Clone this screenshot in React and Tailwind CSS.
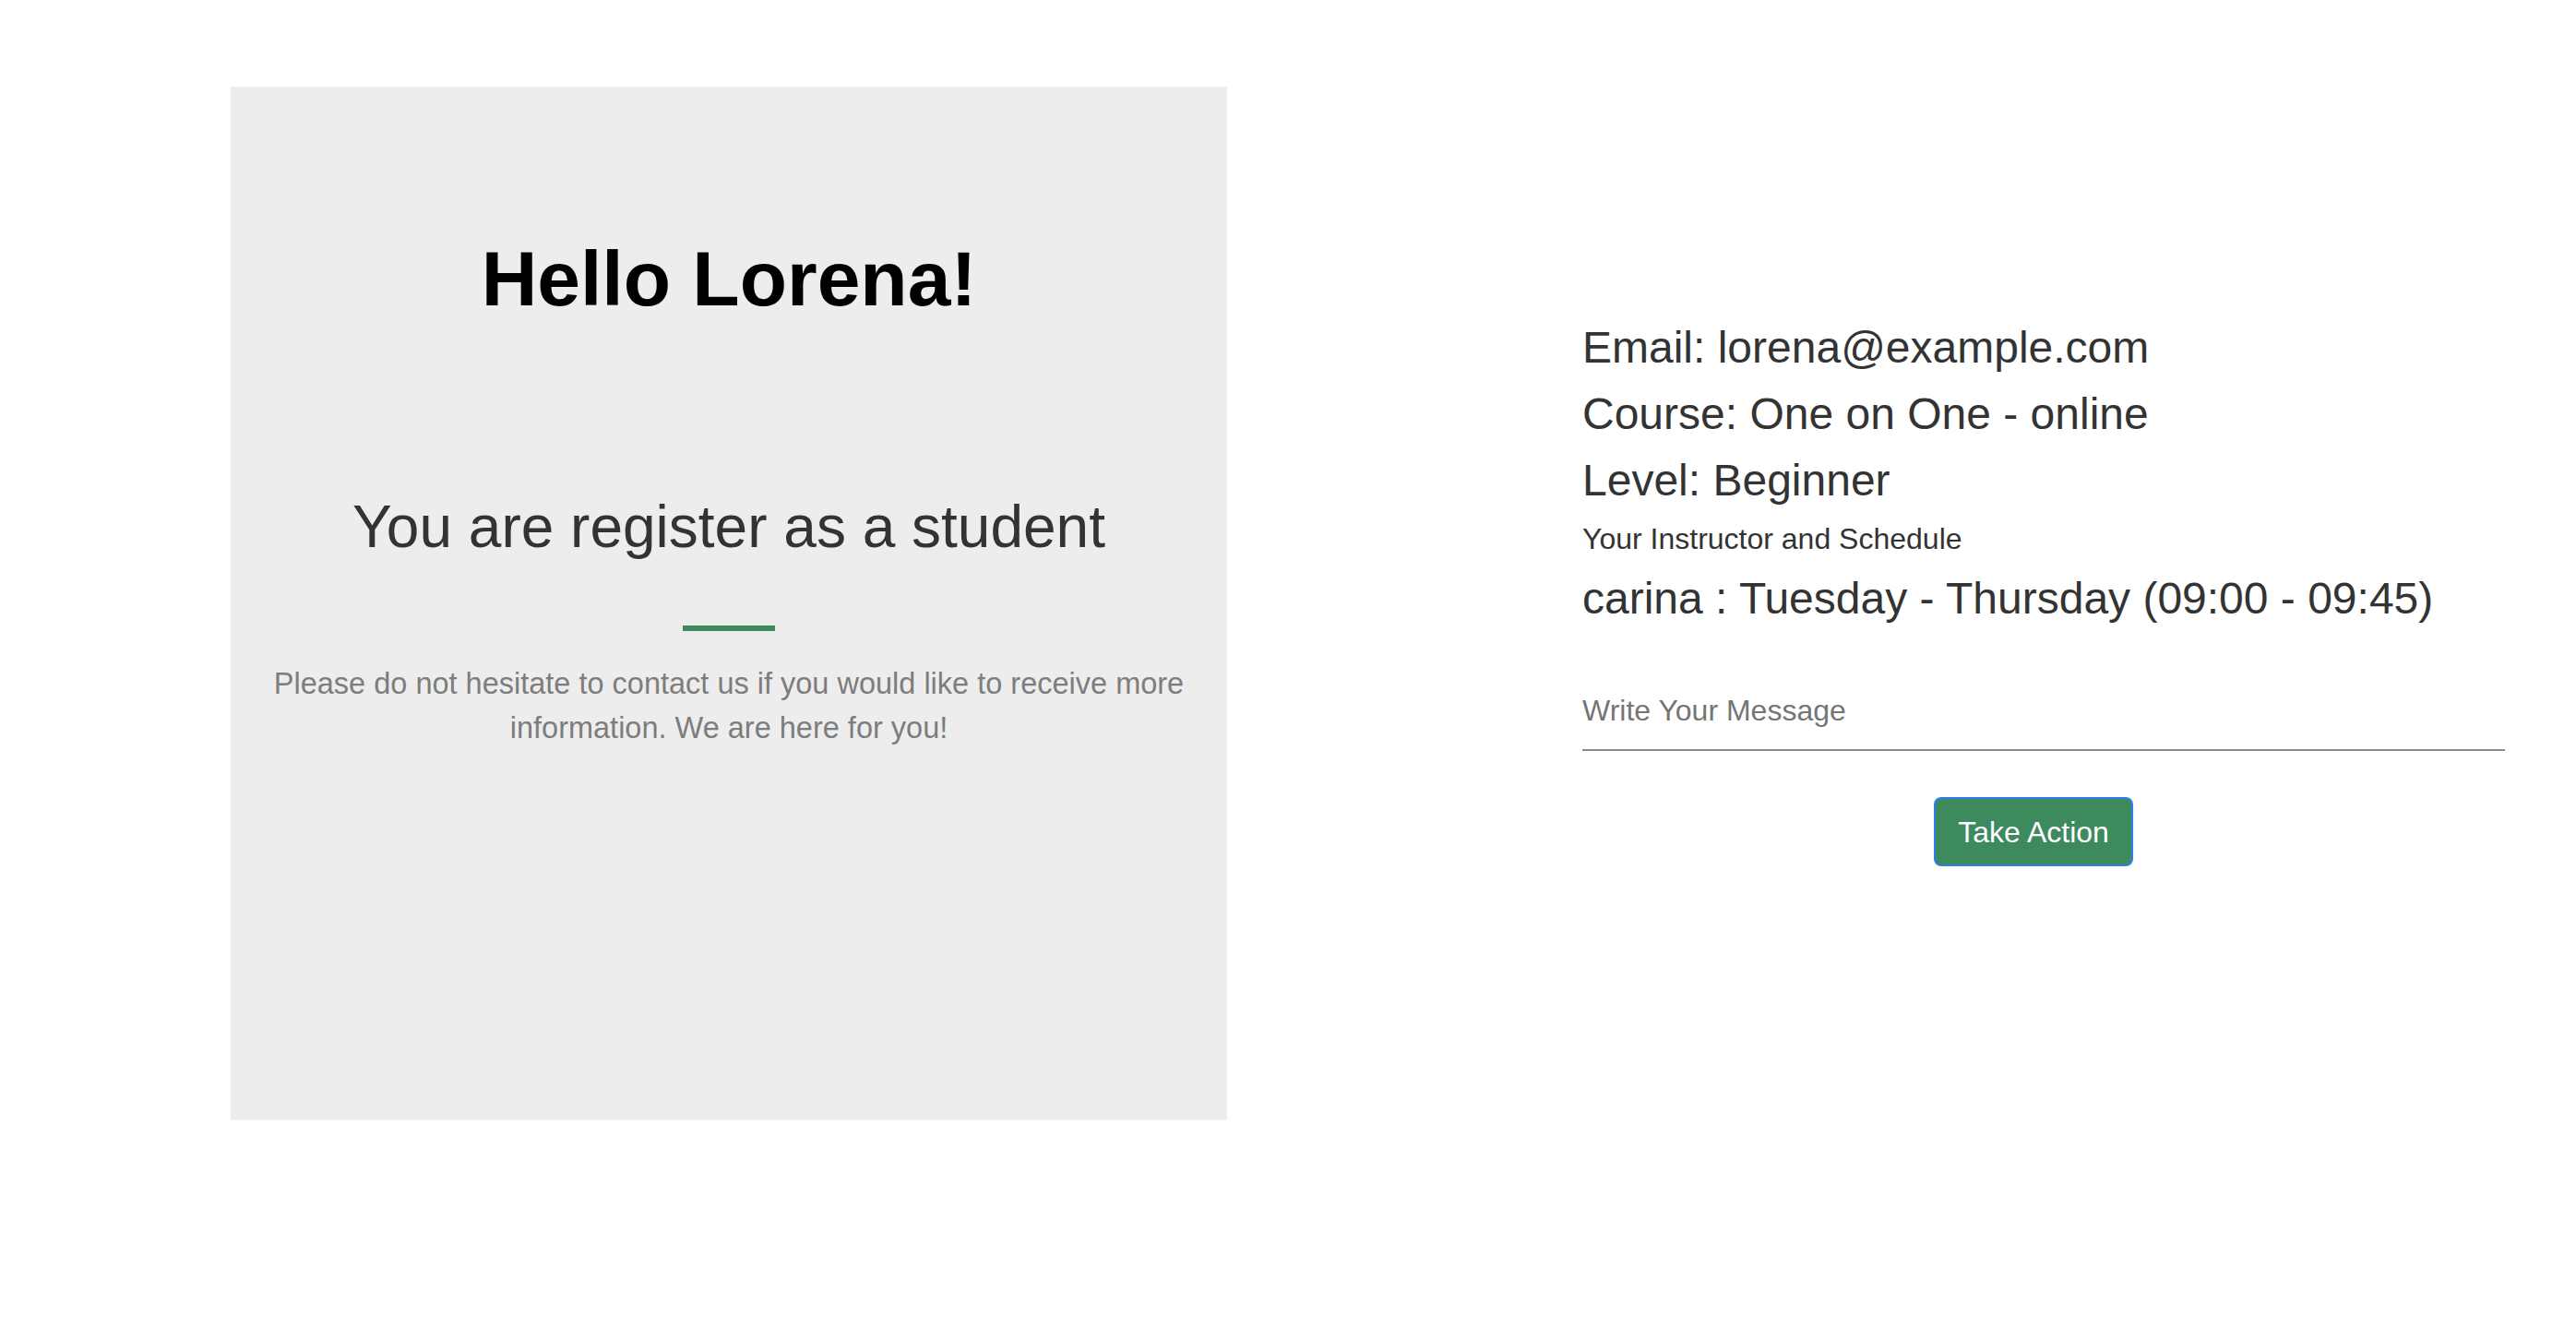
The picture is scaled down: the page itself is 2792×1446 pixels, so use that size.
export default function App() {
  return (
    <div
      className="w-[2792px] h-[1446px] bg-white flex items-start"
      style={{ fontFamily: '"Liberation Sans", Arial, Helvetica, sans-serif' }}
    >
      <div className="ml-[250px] mt-[94px] w-[1080px] h-[1120px] bg-[#ededed] px-[40px] flex flex-col items-center text-center">
        <h1 className="mt-[158px] text-[84px] leading-[1.2] font-bold text-black">Hello Lorena!</h1>
        <h2 className="mt-[180px] text-[64px] leading-[1.2] text-[#333333]">You are register as a student</h2>
        <div className="mt-[68px] w-[100px] h-[6px] bg-[#3d8a5f]"></div>
        <p className="mt-[33px] text-[32.5px] leading-[48px] text-[#7d7d7d]">
          Please do not hesitate to contact us if you would like to receive more information. We are here for you!
        </p>
      </div>
      <div className="ml-[385px] mt-[341px] w-[1000px] flex flex-col text-[#333333]">
        <div className="text-[48px] leading-[72px]">Email: lorena@example.com</div>
        <div className="text-[48px] leading-[72px]">Course: One on One - online</div>
        <div className="text-[48px] leading-[72px]">Level: Beginner</div>
        <div className="mt-[3px] text-[32px] leading-[48px]">Your Instructor and Schedule</div>
        <div className="mt-[5px] text-[48px] leading-[72px]">carina : Tuesday - Thursday (09:00 - 09:45)</div>
        <input
          type="text"
          placeholder="Write Your Message"
          className="mt-[43px] w-full pt-[18px] pb-[18px] text-[32px] leading-[48px] bg-transparent border-0 border-b-2 border-[#8a8a8a] outline-none placeholder:text-[#757575] text-[#333333]"
          style={{ fontFamily: '"Liberation Sans", Arial, Helvetica, sans-serif' }}
        />
        <div className="mt-[50px] flex justify-center pr-[22px]">
          <button
            type="button"
            className="h-[75px] px-[24px] rounded-[8px] bg-[#3d8a5f] border-2 border-[#2f7de8] text-white text-[32px] leading-[48px]"
            style={{ fontFamily: '"Liberation Sans", Arial, Helvetica, sans-serif' }}
          >
            Take Action
          </button>
        </div>
      </div>
    </div>
  );
}
